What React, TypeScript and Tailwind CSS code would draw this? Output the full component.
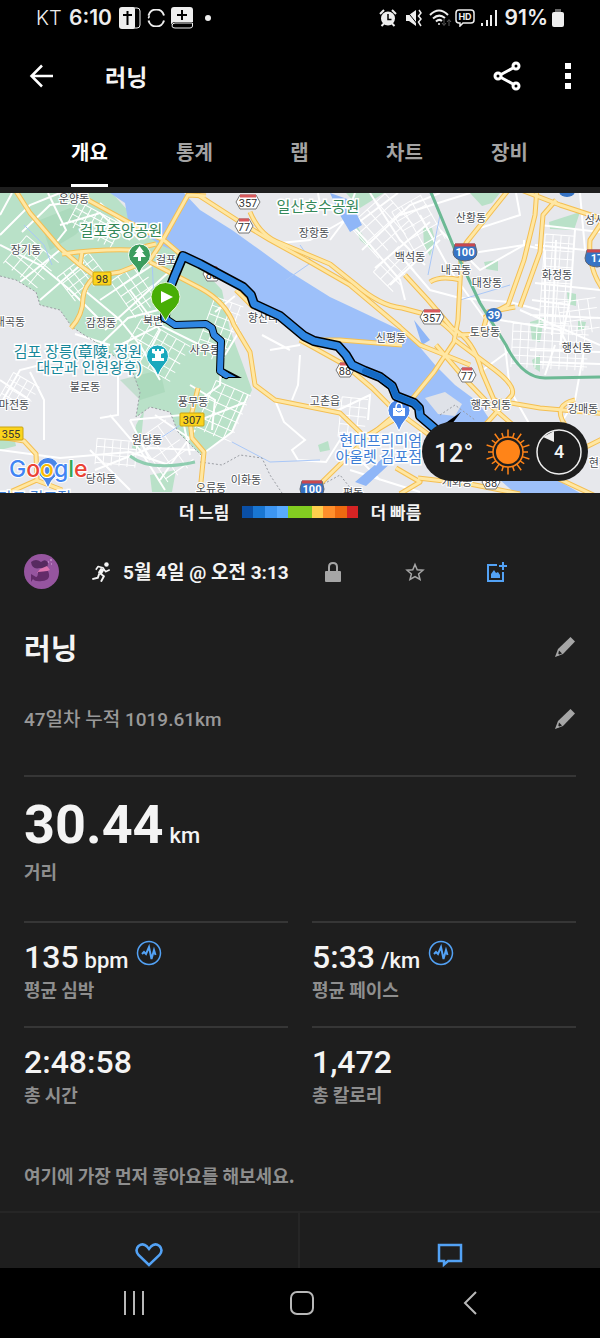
import type { ReactNode } from "react";

const SPEED_COLORS = [
  "bg-[#0a4fa5]", "bg-[#1976d2]", "bg-[#3d96f2]", "bg-[#58abff]", "bg-[#82cc21]",
  "bg-[#82cc21]", "bg-[#ffcf4d]", "bg-[#ff8f2b]", "bg-[#ee6a10]", "bg-[#d62424]",
];

const TABS = ["개요", "통계", "랩", "차트", "장비"];

// x, y (centre), label
const PLACES: [number, number, string][] = [
  [74, 199, "운양동"], [26, 250, "장기동"], [10, 322, "내곡동"], [101, 323, "감정동"],
  [166, 260, "걸포"], [153, 321, "북변"], [205, 350, "사우동"], [85, 387, "불로동"],
  [14, 405, "마전동"], [193, 402, "풍무동"], [147, 440, "원당동"], [101, 479, "당하동"],
  [246, 480, "이화동"], [211, 488, "오류동"], [314, 233, "장항동"], [263, 318, "향산리"],
  [410, 257, "백석동"], [391, 338, "신평동"], [325, 401, "고촌읍"], [471, 218, "산황동"],
  [456, 270, "내곡동"], [487, 283, "대장동"], [485, 332, "토당동"], [557, 275, "화정동"],
  [600, 220, "성사동"], [577, 348, "행신동"], [491, 405, "행주외동"], [583, 409, "강매동"],
  [353, 493, "평동"], [457, 482, "개화동"], [604, 463, "현천동"],
];

const YELLOW_ROADS = [
  "M14 188L30 213L60 248L80 265L95 276Q84 286 83 298Q83 315 71 328",
  "M72 188L90 201L130 223L165 241L185 258",
  "M62 254Q100 249 130 250L156 244",
  "M95 276L120 272L150 260L160 245L188 195L206 196",
  "M80 265L82 252",
  "M150 262L200 288Q226 302 234 325L250 352L255 385L275 400L340 413L365 437L402 415",
  "M198 195L240 222L270 240L310 262L350 285L400 327L420 345L470 365",
  "M250 212Q260 236 280 243L330 264L355 284Q380 306 402 308L432 316Q446 325 455 335",
  "M510 188L470 238Q461 248 461 262L458 320L454 342L434 372L408 404L365 440L318 486",
  "M405 275L428 300L452 328Q474 340 482 372L494 400L540 408L610 414",
  "M430 282Q440 275 461 280",
  "M537 188L535 215L524 260L508 305L484 318",
  "M556 200L543 215L540 252L520 307",
  "M516 188L560 205L600 218",
  "M602 222L590 240Q588 268 602 288",
  "M458 335L482 334L488 312L515 307",
  "M436 345L466 380L490 405L514 426",
  "M455 340L495 370Q516 386 512 395L485 425",
  "M402 415L436 440M402 345L340 340L305 340",
  "M236 290L254 308M300 340L345 365L372 388L396 412",
  "M198 388L190 420L192 438L204 452L200 492",
  "M0 437L24 441L36 454L37 480L10 492M36 480L62 490",
  "M396 468L420 482L400 494M418 478L470 484L520 494M580 450L604 438M540 470L604 500",
  "M565 425Q552 405 575 400",
];

const WHITE_ROADS = [
  "M0 235L30 205L60 193M12 193L0 215M22 232L50 205L90 200",
  "M0 245L40 265L70 290L100 320M20 282L60 250M40 300L84 262",
  "M48 193L66 230L55 244M60 225L100 213L130 240M100 203L140 240",
  "M100 300L160 260M105 330L180 262M84 290L120 320L140 345L160 380",
  "M120 345L160 325L200 345L215 345M130 290L160 330L150 350",
  "M100 345L128 318L158 310M75 334L110 345",
  "M118 360L118 415L100 418M130 420L182 415L190 455M130 420L150 460",
  "M0 450L60 458L130 452L172 466M90 450L130 490M95 470L150 448L195 450",
  "M110 415L140 450L165 490M155 415L195 442M160 480L195 430",
  "M30 372L44 400L44 440M0 380L30 400M0 405L20 370L60 360",
  "M248 395L232 432L200 456M200 400L220 385L222 345M200 420L246 402",
  "M215 312L235 296M225 355L240 330M190 385L215 400L212 430",
  "M275 400L284 422L305 440L292 450L298 460L326 462L340 440",
  "M300 355L298 385L292 400M270 350L300 345M262 335L290 350",
  "M334 412L370 395L368 420M340 440L380 480M350 470L420 492",
  "M330 240L345 220L355 193M345 220L310 240L280 243M318 193L320 205L345 215",
  "M340 212L370 245L400 280L405 300M370 193L400 240L425 265M398 193L355 225",
  "M362 250L410 205L440 193M375 268L430 222M390 285L440 240",
  "M400 215L470 193M400 255L430 290L460 298L510 302L540 310",
  "M420 215L450 270L500 340M440 230L480 270L524 245L524 240",
  "M480 228L520 215L516 193M460 255L524 245L545 250",
  "M540 225L600 232M535 245L585 250L580 193M535 283L600 290",
  "M575 230L570 300L560 345M545 250L545 330M556 240L552 335",
  "M532 300L570 305M530 315L600 318M520 310L600 345",
  "M555 345L545 375M500 320L560 330L570 350M505 345L510 390L530 425",
  "M585 345L575 400L560 425M530 350L600 352M540 362L600 364",
  "M480 372L510 350",
];

const HATCHES: { x: number; y: number; w: number; h: number; step: number; turn: number }[] = [
  { x: 70, y: 212, w: 50, h: 26, step: 7, turn: 28 },
  { x: 10, y: 245, w: 42, h: 36, step: 11, turn: 40 },
  { x: 62, y: 262, w: 40, h: 30, step: 8, turn: -38 },
  { x: 120, y: 268, w: 34, h: 44, step: 9, turn: -35 },
  { x: 128, y: 330, w: 56, h: 40, step: 10, turn: 30 },
  { x: 204, y: 300, w: 30, h: 60, step: 9, turn: 20 },
  { x: 204, y: 386, w: 38, h: 52, step: 10, turn: 24 },
  { x: 96, y: 440, w: 40, h: 26, step: 8, turn: 5 },
  { x: 150, y: 425, w: 34, h: 52, step: 12, turn: -35 },
  { x: 358, y: 204, w: 48, h: 44, step: 12, turn: -42 },
  { x: 402, y: 200, w: 34, h: 50, step: 11, turn: -30 },
  { x: 378, y: 255, w: 36, h: 28, step: 10, turn: -45 },
  { x: 542, y: 235, w: 30, h: 92, step: 8, turn: 4 },
  { x: 512, y: 325, w: 76, h: 44, step: 8, turn: 3 },
  { x: 560, y: 300, w: 38, h: 34, step: 10, turn: -8 },
  { x: 4, y: 378, w: 30, h: 30, step: 8, turn: 30 },
  { x: 340, y: 398, w: 26, h: 40, step: 9, turn: 6 },
];

const ROUTE =
  "M165 318L166 298L175 275L183 256L200 264L243 287L251 295L254 304L280 316L304 336L314 341L338 346L346 355L352 365L365 371L380 377L392 386L396 396L414 403L419 408L420 416L434 428";
const LOOP = "M166 319L175 325L206 324L212 328L214 335L221 341L220 371L226 375";

function hatchPath(x: number, y: number, w: number, h: number, step: number) {
  let d = "";
  for (let i = 0; i <= w; i += step) d += `M${x + i} ${y}V${y + h}`;
  for (let j = 0; j <= h; j += step) d += `M${x} ${y + j}H${x + w}`;
  return d;
}

function HexShield({ x, y, label }: { x: number; y: number; label: string }) {
  const w = label.length > 2 ? 12 : 9;
  return (
    <g>
      <path
        d={`M${x - w} ${y}L${x - w + 4} ${y - 7}H${x + w - 4}L${x + w} ${y}L${x + w - 4} ${y + 7}H${x - w + 4}Z`}
        fill="#fff"
        stroke="#777"
      />
      <path d={`M${x - w + 4} ${y - 6}H${x + w - 4}`} stroke="#d9595c" strokeWidth="3" />
      <text x={x} y={y + 5} fontSize="11" fill="#333" textAnchor="middle">{label}</text>
    </g>
  );
}

function BlueShield({ x, y, label }: { x: number; y: number; label: string }) {
  return (
    <g>
      <path
        d={`M${x - 10} ${y - 8}H${x + 10}L${x + 12} ${y}Q${x + 12} ${y + 8} ${x} ${y + 9}Q${x - 12} ${y + 8} ${x - 12} ${y}Z`}
        fill="#3673c4"
        stroke="#5f6673"
      />
      <path d={`M${x - 10} ${y - 7}H${x + 10}`} stroke="#c9474d" strokeWidth="3" />
      <text x={x} y={y + 4} fontSize="11" fontWeight="700" fill="#fff" textAnchor="middle">{label}</text>
    </g>
  );
}

function YellowShield({ x, y, label }: { x: number; y: number; label: string }) {
  const w = label.length > 2 ? 12 : 9;
  return (
    <g>
      <rect x={x - w} y={y - 6} width={w * 2} height="13" rx="1" fill="#fbd31c" stroke="#c9a412" />
      <text x={x} y={y + 5} fontSize="11" fill="#333" textAnchor="middle">{label}</text>
    </g>
  );
}

function RouteMap() {
  return (
    <svg
      viewBox="0 193 600 300"
      preserveAspectRatio="xMidYMid slice"
      className="block w-full font-['Roboto','Noto_Sans_CJK_KR',sans-serif]"
      role="img"
      aria-label="러닝 경로 지도"
    >
      <rect x="0" y="193" width="600" height="300" fill="#e7e8ec" />

      {/* parks and city green */}
      <g fill="#b9e1c8">
        <path d="M0 193H112L132 215L150 232L186 252L222 290L230 330L242 362L252 390L232 432L202 456L178 432L170 412L150 407L136 417L140 392L132 370L100 345L72 327L60 310L40 305L36 292L16 280L0 276Z" />
        <path d="M346 193H384L360 208Z" />
        <path d="M350 215L372 250L360 240Z" />
        <path d="M470 193H500L492 203L482 206Z" />
        <path d="M423 227L432 228L435 240L430 256L424 246Z" />
        <path d="M484 262L498 260V271L486 269Z" />
        <path d="M549 222L580 212L574 230L550 229Z" />
        <path d="M567 292L576 294V306L568 304Z" />
        <path d="M530 322L544 318L540 342L532 340Z" />
        <path d="M578 321L586 322L584 330H578Z" />
        <path d="M532 360L540 355V372L534 368Z" />
        <path d="M136 425L144 410L140 450L132 448ZM150 475L176 470L172 492H152Z" />
        <path d="M318 445L328 441L330 450L320 452Z" />
        <path d="M0 440L14 436L16 446L0 450Z" />
      </g>
      <path d="M40 220L70 208L90 222L75 235L50 250ZM120 380L140 400L165 392L160 370Z" fill="#9fd3b2" opacity=".5" />

      {/* minor streets */}
      <g fill="none" stroke="#fff" strokeWidth="2">
        {WHITE_ROADS.map((d) => <path key={d} d={d} />)}
      </g>
      <g fill="none" stroke="#fff" strokeWidth="1">
        {HATCHES.map((p) => (
          <path
            key={`${p.x}-${p.y}`}
            d={hatchPath(p.x, p.y, p.w, p.h, p.step)}
            transform={`rotate(${p.turn} ${p.x + p.w / 2} ${p.y + p.h / 2})`}
          />
        ))}
      </g>

      {/* Han river and streams */}
      <path
        d="M110 193L125 203L128 220L145 235L163 246L186 256L202 263L245 289L254 304L280 316L306 338L340 347L352 365L380 376L396 392L420 408L440 430L500 480L515 493H580L540 470L505 440L490 420L478 402L455 385L436 366L418 345L400 330L362 312L330 297L290 272L260 250L232 230L200 210L184 193Z"
        fill="#9dc0fa"
      />
      <path d="M425 398L445 392L462 404L455 416L438 414Z" fill="#dfe2e8" />
      <path d="M330 193L350 200L362 225L350 232L340 215ZM355 482L390 452L396 458L366 486ZM414 320L430 340L422 345Z" fill="#8fb6f7" />
      <g fill="none" stroke="#a9c7f7" strokeWidth="1">
        <path d="M232 442L270 462L320 460M150 445L200 412M286 280L312 262L300 245M430 193L440 215L428 275M460 300L510 285" />
        <path d="M24 225L44 245L52 265M152 260L154 300" />
      </g>
      <path
        d="M0 276L16 280L36 292L40 305L60 310L72 327L100 345L132 370L140 392L136 417L150 407L170 412L178 432L202 456M200 462L222 465L240 455L262 458L270 475L282 493M320 486L340 475L352 490M440 415L455 405L475 420"
        fill="none"
        stroke="#9a9da3"
        strokeDasharray="2 2"
      />

      {/* highways */}
      <g fill="none" strokeLinejoin="round">
        <g stroke="#f4bf52" strokeWidth="5">{YELLOW_ROADS.map((d) => <path key={d} d={d} />)}</g>
        <g stroke="#ffe7a3" strokeWidth="3">{YELLOW_ROADS.map((d) => <path key={d} d={d} />)}</g>
        <path d="M430 190L455 250L480 303L506 345Q522 378 545 378L600 377" stroke="#6cb994" strokeWidth="3" />
        <path d="M130 456Q150 472 195 462" stroke="#8fcdb0" strokeWidth="3" />
      </g>

      <HexShield x={248} y={202} label="357" />
      <HexShield x={244} y={226} label="77" />
      <HexShield x={212} y={274} label="88" />
      <HexShield x={432} y={317} label="357" />
      <HexShield x={345} y={370} label="88" />
      <HexShield x={467} y={375} label="77" />
      <HexShield x={491} y={482} label="88" />
      <BlueShield x={465} y={252} label="100" />
      <BlueShield x={312} y={489} label="100" />
      <BlueShield x={597} y={258} label="17" />
      <ellipse cx="494" cy="315" rx="8" ry="7" fill="#3673c4" />
      <text x="494" y="319" fontSize="11" fontWeight="700" fill="#fff" textAnchor="middle">39</text>
      <ellipse cx="567" cy="191" rx="8" ry="6" fill="#3673c4" />
      <YellowShield x={102} y={278} label="98" />
      <YellowShield x={192} y={419} label="307" />
      <YellowShield x={11} y={433} label="355" />

      <g fontSize="11" fill="#484b50" stroke="#fff" strokeWidth="2" paintOrder="stroke" textAnchor="middle">
        {PLACES.map(([x, y, name]) => <text key={`${x}-${y}`} x={x} y={y + 4}>{name}</text>)}
      </g>
      <g fontSize="15" stroke="#fff" strokeWidth="3" paintOrder="stroke">
        <g fill="#35885a">
          <text x="121" y="236" textAnchor="middle">걸포중앙공원</text>
          <text x="318" y="212" textAnchor="middle">일산호수공원</text>
        </g>
        <g fill="#17889a" textAnchor="end">
          <text x="142" y="357">김포 장릉(章陵, 정원</text>
          <text x="142" y="373">대군과 인헌왕후)</text>
        </g>
        <g fill="#3f7fd6" textAnchor="end">
          <text x="422" y="446">현대프리미엄</text>
          <text x="422" y="462">아울렛 김포점</text>
          <text x="71" y="503">마트 김포점</text>
        </g>
      </g>

      {/* points of interest */}
      <g stroke="#fff">
        <path d="M139 274Q136 266 132 263A11 11 0 1 1 147 263Q142 266 139 274Z" fill="#3c9d5f" />
        <path d="M158 376Q155 368 150 364A11 11 0 1 1 165 364Q161 368 158 376Z" fill="#1aa9bd" />
        <path d="M399 431Q396 423 391 418A11 11 0 1 1 407 418Q402 423 399 431Z" fill="#4a86e8" />
        <path d="M48 488Q45 480 40 476A11 11 0 1 1 56 476Q51 480 48 488Z" fill="#4a86e8" />
      </g>
      <path d="M139.500 246L144 252H142L146 257H141V261H138V257H133L137 252H135Z" fill="#fff" />
      <path d="M152 349H155V351H157V349H159V351H161V349H164V353L161 354V358H164V361H152V358H155V354L152 353Z" fill="#fff" />
      <path d="M393 408H405V416H393Z" fill="#fff" />
      <path d="M396 408Q396 403 399 403Q402 403 402 408" fill="none" stroke="#fff" strokeWidth="1.500" />
      <path d="M396 410Q399 414 402 410" fill="none" stroke="#4a86e8" />

      {/* recorded track */}
      <path d="M433 432L461 412L446 432Z" fill="#000" />
      <g fill="none" strokeLinejoin="round" strokeLinecap="round">
        <path d={LOOP} stroke="#000" strokeWidth="8" />
        <path d="M223 368L242 378L222 378Z" fill="#000" stroke="none" />
        <path d={ROUTE} stroke="#000" strokeWidth="10" />
        <path d={LOOP} stroke="#2f86e2" strokeWidth="6" />
        <path d="M223 370L236 377L224 377Z" fill="#2f86e2" stroke="none" />
        <path d={ROUTE} stroke="#2f86e2" strokeWidth="7" />
        <path d="M365 371L380 377L392 386L396 396L414 403L419 408" stroke="#1469c4" strokeWidth="6" />
      </g>
      <path d="M165.500 321Q161 312 155 307A14.500 14.500 0 1 1 176 307Q170 312 165.500 321Z" fill="#48ae05" stroke="#e9f5df" />
      <path d="M161 291V303L173 297Z" fill="#fff" />

      <text x="9" y="477" fontSize="23" fontWeight="500" stroke="#fff" strokeWidth="2" paintOrder="stroke" className="font-['Inter',sans-serif]">
        <tspan fill="#4285f4">G</tspan>
        <tspan fill="#ea4335">o</tspan>
        <tspan fill="#fbbc05">o</tspan>
        <tspan fill="#4285f4">g</tspan>
        <tspan fill="#34a853">l</tspan>
        <tspan fill="#ea4335">e</tspan>
      </text>
    </svg>
  );
}

function SunIcon() {
  const rays = Array.from({ length: 20 }, (_, i) => i * 18);
  return (
    <svg viewBox="-23 -23 46 46" className="h-[46px] w-[46px]" aria-hidden="true">
      <circle r="12" fill="#ff8418" />
      <circle r="15" fill="none" stroke="#ff8418" strokeWidth="1.500" />
      {rays.map((a, i) => (
        <path key={a} d={i % 2 ? "M0 -15V-20" : "M0 -15V-22.500"} stroke="#ff8418" strokeWidth="1.500" transform={`rotate(${a})`} />
      ))}
    </svg>
  );
}

function WeatherPill() {
  return (
    <div className="absolute right-3 bottom-3 flex h-[59px] w-[166px] items-center rounded-full bg-[#1e1e1e] pr-[6px] pl-3">
      <span className="w-[40px] pt-[2px] text-[26px] leading-none font-medium">12°</span>
      <span className="ml-[11px]"><SunIcon /></span>
      <span className="relative ml-auto flex h-[46px] w-[46px] items-center justify-center text-[18px] font-medium">
        <svg viewBox="-23 -23 46 46" className="absolute inset-0" aria-hidden="true">
          <circle r="22" fill="none" stroke="#eee" strokeWidth="1.500" />
          <path d="M-16 -15L-5 -21V-10Z" fill="#eee" />
        </svg>
        4
      </span>
    </div>
  );
}

function StatusBar() {
  return (
    <div className="flex h-[35px] items-center justify-between bg-black pr-9 pl-9 font-['Inter',sans-serif] text-[#eee]">
      <div className="flex items-center">
        <span className="w-[33px] text-[20px] font-light">KT</span>
        <span className="w-[50px] text-[21px] font-semibold">6:10</span>
        <svg viewBox="0 0 22 22" className="h-[22px] w-[22px]" aria-hidden="true">
          <rect x="1" y="1" width="20" height="20" rx="3" fill="none" stroke="#eee" />
          <path d="M3 0H14Q16 0 16 2V20Q16 22 14 22H3Q0 22 0 19V3Q0 0 3 0Z" fill="#eee" />
          <path d="M8.500 4V18M4 8H13" stroke="#000" strokeWidth="2" />
        </svg>
        <svg viewBox="0 0 18 18" className="ml-[6px] h-[18px] w-[18px]" fill="none" stroke="#eee" strokeWidth="2" aria-hidden="true">
          <path d="M1.500 6.500A8 8 0 0 1 17 6.500M1.500 11.500A8 8 0 0 0 17 11.500" />
          <path d="M1.500 6.500Q3 8 1 9" strokeWidth="1.500" />
        </svg>
        <svg viewBox="0 0 22 22" className="ml-[6px] h-[22px] w-[22px]" aria-hidden="true">
          <path d="M3 0H19Q22 0 22 3V15H4Q1 15 0 18V3Q0 0 3 0Z" fill="#eee" />
          <path d="M11 3V13M6 8H16" stroke="#000" strokeWidth="2" />
          <path d="M21.500 16H4Q1 16 1 19Q1 21 4 21H19Q21.500 21 21.500 19Z" fill="none" stroke="#eee" />
        </svg>
        <span className="ml-3 h-[6px] w-[6px] rounded-full bg-[#eee]" />
      </div>
      <div className="flex items-center">
        <svg viewBox="0 0 18 18" className="h-[18px] w-[18px]" aria-hidden="true">
          <circle cx="9" cy="9.500" r="7" fill="#eee" />
          <path d="M1 5L5 1M17 5L13 1M2.500 17L5 14.500M15.500 17L13 14.500" stroke="#eee" strokeWidth="2" />
          <path d="M9 5V10.500H12.500" fill="none" stroke="#000" strokeWidth="1.500" />
        </svg>
        <svg viewBox="0 0 18 18" className="ml-2 h-[18px] w-[18px]" aria-hidden="true">
          <path d="M1 6H4L11 1V17L4 12H1Z" fill="#eee" />
          <path d="M1 1L13 16" stroke="#000" />
          <path d="M14 1L16 4L13.500 7L16 10L13.500 13L16 17" fill="none" stroke="#eee" strokeWidth="1.500" />
        </svg>
        <svg viewBox="0 0 23 18" className="ml-[6px] h-[18px] w-[23px]" fill="none" stroke="#eee" strokeWidth="2" aria-hidden="true">
          <path d="M1 6Q10 -3 19 6M4 9.500Q10 4 16 9M7 12.500Q10 9.500 13 12" />
          <circle cx="10" cy="15" r="1" fill="#eee" stroke="none" />
          <path d="M15 10V16M13 14L15 16.500L17 14M20 17V11M18 13L20 10.500L22 13" stroke="#555" strokeWidth="1" />
        </svg>
        <svg viewBox="0 0 20 18" className="ml-[3px] h-[18px] w-5" aria-hidden="true">
          <path d="M4 1H16Q19 1 19 4V11Q19 14 16 14H8L5 17V14H4Q1 14 1 11V4Q1 1 4 1Z" fill="none" stroke="#eee" strokeWidth="1.500" />
          <text x="10" y="11" fontSize="9" fontWeight="700" fill="#eee" textAnchor="middle">HD</text>
        </svg>
        <svg viewBox="0 0 16 18" className="ml-[6px] h-[18px] w-4" stroke="#eee" strokeWidth="2" aria-hidden="true">
          <path d="M1 14V17M6 11V17M10 6V17M15 1V17" />
        </svg>
        <span className="ml-2 text-[21px] font-semibold">91%</span>
        <svg viewBox="0 0 12 18" className="ml-1 h-[18px] w-3" aria-hidden="true">
          <rect x="3" width="6" height="4" fill="#666" />
          <rect y="3" width="12" height="15" rx="2" fill="#eee" />
        </svg>
      </div>
    </div>
  );
}

function PencilIcon() {
  return (
    <svg viewBox="0 0 20 20" className="h-5 w-5" fill="#a6a6a6" aria-hidden="true">
      <path d="M15.500 0L20 4.500L8 17L0 20L3 12Z" />
      <path d="M4 13.500L7 16.500L3 18Z" fill="#1e1e1e" />
      <path d="M2.500 16L4.500 18L0.500 19.500Z" />
    </svg>
  );
}

function EditRow({ label, children }: { label: string; children: ReactNode }) {
  return (
    <div className="flex items-center justify-between">
      {children}
      <button type="button" aria-label={label} className="mr-[1px]"><PencilIcon /></button>
    </div>
  );
}

function Caption({ children }: { children: ReactNode }) {
  return (
    <p className="font-['Noto_Sans_CJK_KR',sans-serif] text-[18px] leading-6 font-bold text-[#8e8e8e]">{children}</p>
  );
}

function Metric({ value, unit, label, chart }: { value: string; unit?: string; label: string; chart?: boolean }) {
  return (
    <div className="h-[105px] border-t-2 border-[#363636] pt-[14px]">
      <div className="flex items-start">
        <p className="text-[32px] leading-10 font-medium text-[#f4f4f4]">
          {value}
          {unit && <span className="ml-[6px] text-[22px] leading-none">{unit}</span>}
        </p>
        {chart && (
          <button type="button" aria-label={`${label} 차트`} className="mt-[3px] ml-2">
            <svg viewBox="0 0 26 26" className="h-[26px] w-[26px]" fill="none" stroke="#53a2f5" strokeWidth="1.500" aria-hidden="true">
              <circle cx="13" cy="13" r="11.500" />
              <path d="M6 14L8 12L10 14L13 7L15.500 19L18 10L19.500 15" strokeWidth="2" />
            </svg>
          </button>
        )}
      </div>
      <Caption>{label}</Caption>
    </div>
  );
}

export default function App() {
  return (
    <div className="flex min-h-screen flex-col bg-[#1e1e1e] font-['Roboto','Noto_Sans_CJK_KR',sans-serif] text-[#f4f4f4]">
      <StatusBar />

      <header className="bg-black font-['Noto_Sans_CJK_KR',sans-serif]">
        <div className="flex h-[82px] items-center pr-[20px] pl-[29px]">
          <button type="button" aria-label="뒤로">
            <svg viewBox="0 0 24 24" className="h-6 w-6" fill="none" stroke="#fff" strokeWidth="2.500" aria-hidden="true">
              <path d="M24 12H3M13 1.500L2.500 12L13 22.500" />
            </svg>
          </button>
          <h1 className="ml-[52px] text-[23px] font-bold">러닝</h1>
          <button type="button" aria-label="공유" className="ml-auto">
            <svg viewBox="0 0 28 30" className="h-[30px] w-7" fill="none" stroke="#fff" strokeWidth="3" aria-hidden="true">
              <circle cx="5" cy="15" r="3" />
              <circle cx="23" cy="5" r="3" />
              <circle cx="23" cy="25" r="3" />
              <path d="M8 13.500L20 7M8 16.500L20 23" />
            </svg>
          </button>
          <button type="button" aria-label="더보기" className="ml-[35px] flex w-6 flex-col items-center gap-1">
            <span className="h-[6px] w-[6px] bg-white" />
            <span className="h-[6px] w-[6px] bg-white" />
            <span className="h-[6px] w-[6px] bg-white" />
          </button>
        </div>
        <nav className="grid h-[70px] grid-cols-5 pr-[38px] pl-[37px]">
          {TABS.map((tab, i) => (
            <button key={tab} type="button" className="flex justify-center text-[20px] font-bold">
              <span
                className={`flex h-full items-center border-b-[3px] pt-[3px] ${
                  i === 0 ? "border-white text-white" : "border-transparent text-[#a3a3a3]"
                }`}
              >
                {tab}
              </span>
            </button>
          ))}
        </nav>
      </header>

      <section className="relative border-t-[6px] border-[#1e1e1e]">
        <RouteMap />
        <WeatherPill />
      </section>

      <div className="flex h-[37px] items-center justify-center gap-3 font-['Noto_Sans_CJK_KR',sans-serif] text-[17px] font-bold">
        <span>더 느림</span>
        <div className="grid h-3 w-[117px] grid-cols-10">
          {SPEED_COLORS.map((color, i) => <span key={i} className={color} />)}
        </div>
        <span>더 빠름</span>
      </div>

      <main className="px-6 pt-6">
        <div className="flex h-[35px] items-center">
          <svg viewBox="0 0 35 35" className="h-[35px] w-[35px]" aria-hidden="true">
            <circle cx="17.500" cy="17.500" r="17.500" fill="#96559f" />
            <path d="M7 8Q12 4 17 8Q22 4 24 9L23 15L16 14Q8 16 7 8Z" fill="#572a60" />
            <path d="M16 15L23 12L26 16L20 18L13 19Z" fill="#dd74b0" />
            <path d="M14 18L24 17Q28 26 18 27Q11 28 9 25L7 28V20L12 23Q14 23 14 18Z" fill="#632b69" />
            <path d="M26 6H28M24 8H25M27 10H28" stroke="#d9b2df" />
          </svg>
          <svg viewBox="270 62 60 62" className="ml-8 h-5 w-5" fill="none" stroke="#f4f4f4" strokeLinejoin="round" aria-hidden="true">
            <circle cx="317" cy="70" r="7" fill="#f4f4f4" stroke="none" />
            <path d="M284 86L291 76L306 80L314 92L327 86" strokeWidth="5" />
            <path d="M305 83L296 98" strokeWidth="13" />
            <path d="M297 97L309 106L300 123M295 97L290 111L273 115" strokeWidth="6" />
          </svg>
          <p className="ml-3 pt-1 text-[19px] font-bold">5월 4일 @ 오전 3:13</p>
          <div className="mr-[38px] ml-auto grid grid-cols-3">
            <button type="button" aria-label="비공개" className="flex w-[82px] justify-center">
              <svg viewBox="0 0 16 20" className="h-5 w-4" aria-hidden="true">
                <rect y="9" width="16" height="11" rx="1" fill="#a6a6a6" />
                <path d="M4 10V5Q4 1 8 1Q12 1 12 5V10" fill="none" stroke="#a6a6a6" strokeWidth="2" />
              </svg>
            </button>
            <button type="button" aria-label="즐겨찾기" className="flex w-[82px] justify-center">
              <svg viewBox="0 0 20 20" className="h-5 w-5" fill="none" stroke="#a6a6a6" strokeWidth="1.500" aria-hidden="true">
                <path d="M10 2.500L12.200 7.700L18 8.200L13.600 12L15 17.500L10 14.500L5 17.500L6.400 12L2 8.200L7.800 7.700Z" />
              </svg>
            </button>
            <button type="button" aria-label="사진 추가" className="flex w-[82px] justify-center">
              <svg viewBox="0 0 20 20" className="h-5 w-5" fill="none" stroke="#53a2f5" strokeWidth="2" aria-hidden="true">
                <path d="M10 3H1V19H16V10M16 0V8M12 4H20" />
                <path d="M4 16V12L7 8L9 11L11 10L13 13V16Z" fill="#53a2f5" stroke="none" />
              </svg>
            </button>
          </div>
        </div>

        <div className="mt-9 flex flex-col gap-[34px]">
          <EditRow label="제목 수정">
            <h2 className="font-['Noto_Sans_CJK_KR',sans-serif] text-[29px] leading-[44px] font-bold">러닝</h2>
          </EditRow>
          <EditRow label="메모 수정">
            <p className="pt-[3px] text-[19px] leading-7 font-medium text-[#999]">47일차 누적 1019.61km</p>
          </EditRow>
        </div>

        <section className="mt-[41px] border-t-2 border-[#363636] pt-[14px]">
          <p className="text-[54px] leading-[68px] font-bold">
            30.44<span className="ml-[6px] text-[22px] leading-none font-medium">km</span>
          </p>
          <Caption>거리</Caption>
        </section>

        <section className="mt-[38px] grid grid-cols-2 gap-x-6">
          <Metric value="135" unit="bpm" label="평균 심박" chart />
          <Metric value="5:33" unit="/km" label="평균 페이스" chart />
          <Metric value="2:48:58" label="총 시간" />
          <Metric value="1,472" label="총 칼로리" />
        </section>

        <div className="mt-8">
          <Caption>여기에 가장 먼저 좋아요를 해보세요.</Caption>
        </div>
      </main>

      <div className="mt-6 grid h-[57px] grid-cols-2 border-t-2 border-[#262626]">
        <button type="button" aria-label="좋아요" className="flex justify-center border-r-2 border-[#262626] pt-[30px]">
          <svg viewBox="0 0 28 24" className="h-6 w-7" fill="none" stroke="#53a2f5" strokeWidth="2.500" aria-hidden="true">
            <path d="M14 22L3.500 12Q-0.500 7 3.500 3Q8 -0.500 12 3.500L14 6L16 3.500Q20 -0.500 24.500 3Q28.500 7 24.500 12Z" />
          </svg>
        </button>
        <button type="button" aria-label="댓글" className="flex justify-center pt-[30px]">
          <svg viewBox="0 0 26 24" className="h-6 w-[26px]" fill="none" stroke="#53a2f5" strokeWidth="2.500" aria-hidden="true">
            <path d="M2 2H24V18H11L7 21.500V18H2Z" />
          </svg>
        </button>
      </div>

      <nav className="grid flex-1 grid-cols-3 items-center justify-items-center bg-black py-[22px] pr-[46px] pl-[50px]">
        <button type="button" aria-label="최근 앱">
          <svg viewBox="0 0 22 24" className="h-6 w-[22px]" stroke="#b8b8b8" strokeWidth="2" aria-hidden="true">
            <path d="M2 0V24M11 0V24M20 0V24" />
          </svg>
        </button>
        <button type="button" aria-label="홈">
          <svg viewBox="0 0 24 26" className="h-[26px] w-6" fill="none" stroke="#b8b8b8" strokeWidth="2" aria-hidden="true">
            <rect x="1" y="2" width="22" height="22" rx="6" />
          </svg>
        </button>
        <button type="button" aria-label="이전">
          <svg viewBox="0 0 14 24" className="h-6 w-[14px]" fill="none" stroke="#b8b8b8" strokeWidth="2" aria-hidden="true">
            <path d="M13 1L2 12L13 23" />
          </svg>
        </button>
      </nav>
    </div>
  );
}
